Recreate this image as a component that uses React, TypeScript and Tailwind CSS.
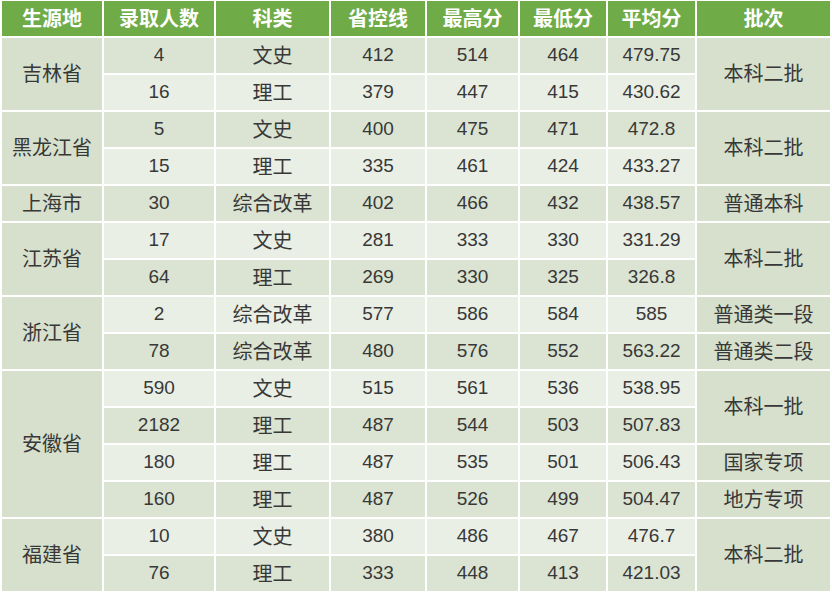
import React from "react";

type Row = { n: string; k: string; c: string; hi: string; lo: string; avg: string };

const rows: Row[] = [
  { n: "4", k: "文史", c: "412", hi: "514", lo: "464", avg: "479.75" },
  { n: "16", k: "理工", c: "379", hi: "447", lo: "415", avg: "430.62" },
  { n: "5", k: "文史", c: "400", hi: "475", lo: "471", avg: "472.8" },
  { n: "15", k: "理工", c: "335", hi: "461", lo: "424", avg: "433.27" },
  { n: "30", k: "综合改革", c: "402", hi: "466", lo: "432", avg: "438.57" },
  { n: "17", k: "文史", c: "281", hi: "333", lo: "330", avg: "331.29" },
  { n: "64", k: "理工", c: "269", hi: "330", lo: "325", avg: "326.8" },
  { n: "2", k: "综合改革", c: "577", hi: "586", lo: "584", avg: "585" },
  { n: "78", k: "综合改革", c: "480", hi: "576", lo: "552", avg: "563.22" },
  { n: "590", k: "文史", c: "515", hi: "561", lo: "536", avg: "538.95" },
  { n: "2182", k: "理工", c: "487", hi: "544", lo: "503", avg: "507.83" },
  { n: "180", k: "理工", c: "487", hi: "535", lo: "501", avg: "506.43" },
  { n: "160", k: "理工", c: "487", hi: "526", lo: "499", avg: "504.47" },
  { n: "10", k: "文史", c: "380", hi: "486", lo: "467", avg: "476.7" },
  { n: "76", k: "理工", c: "333", hi: "448", lo: "413", avg: "421.03" },
];

const provinces = [
  { name: "吉林省", cls: "row-start-2 row-span-2" },
  { name: "黑龙江省", cls: "row-start-4 row-span-2" },
  { name: "上海市", cls: "row-start-6 row-span-1" },
  { name: "江苏省", cls: "row-start-7 row-span-2" },
  { name: "浙江省", cls: "row-start-9 row-span-2" },
  { name: "安徽省", cls: "row-start-11 row-span-4" },
  { name: "福建省", cls: "row-start-15 row-span-2" },
];

const batches = [
  { name: "本科二批", cls: "row-start-2 row-span-2" },
  { name: "本科二批", cls: "row-start-4 row-span-2" },
  { name: "普通本科", cls: "row-start-6 row-span-1" },
  { name: "本科二批", cls: "row-start-7 row-span-2" },
  { name: "普通类一段", cls: "row-start-9 row-span-1" },
  { name: "普通类二段", cls: "row-start-10 row-span-1" },
  { name: "本科一批", cls: "row-start-11 row-span-2" },
  { name: "国家专项", cls: "row-start-13 row-span-1" },
  { name: "地方专项", cls: "row-start-14 row-span-1" },
  { name: "本科二批", cls: "row-start-15 row-span-2" },
];

const headers = ["生源地", "录取人数", "科类", "省控线", "最高分", "最低分", "平均分", "批次"];

export default function App() {
  return (
    <div className="w-[832px] h-[593px] bg-white pt-[1px] px-[2px] pb-[2px] font-['Liberation_Sans','Noto_Sans_CJK_SC',sans-serif]">
      <div className="grid grid-cols-[100px_110px_113px_94px_91px_86px_87px_133px] grid-rows-[repeat(16,35px)] gap-[2px] text-[20px] text-[#383838]">
        {headers.map((h) => (
          <div key={h} className="row-start-1 bg-[#6fab46] text-white font-bold flex items-center justify-center">
            {h}
          </div>
        ))}
        {provinces.map((p) => (
          <div key={p.name} className={`${p.cls} col-start-1 bg-[#d6e0cc] flex items-center justify-center`}>
            {p.name}
          </div>
        ))}
        {batches.map((b, i) => (
          <div key={`b${i}`} className={`${b.cls} col-start-8 bg-[#d6e0cc] flex items-center justify-center`}>
            {b.name}
          </div>
        ))}
        {rows.map((r, i) => {
          const bg = i % 2 === 0 ? "bg-[#dbe4d2]" : "bg-[#eaefe5]";
          const vals = [r.n, r.k, r.c, r.hi, r.lo, r.avg];
          return vals.map((v, j) => (
            <div
              key={`${i}-${j}`}
              className={`${bg} ${j === 1 ? "text-[20px]" : "text-[19px]"} flex items-center justify-center`}
            >
              {v}
            </div>
          ));
        })}
      </div>
    </div>
  );
}
